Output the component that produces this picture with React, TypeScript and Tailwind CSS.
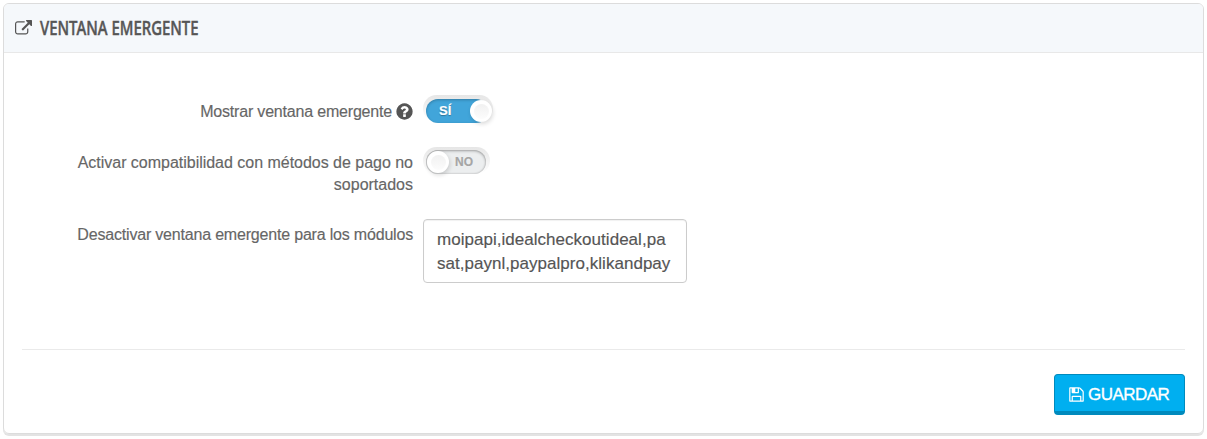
import React from "react";

type IconProps = { className?: string; d: string };

const PATHS = {
  externalLink:
    "M1408 928v320q0 119-84.5 203.5t-203.5 84.5h-832q-119 0-203.5-84.5t-84.5-203.5v-832q0-119 84.5-203.5t203.5-84.5h704q14 0 23 9t9 23v64q0 14-9 23t-23 9h-704q-66 0-113 47t-47 113v832q0 66 47 113t113 47h832q66 0 113-47t47-113v-320q0-14 9-23t23-9h64q14 0 23 9t9 23zm384-864v512q0 26-19 45t-45 19-45-19l-176-176-652 652q-10 10-23 10t-23-10l-114-114q-10-10-10-23t10-23l652-652-176-176q-19-19-19-45t19-45 45-19h512q26 0 45 19t19 45z",
  floppy:
    "M512 1536h768v-384h-768v384zm896 0h128v-896q0-14-10-38.5t-20-34.5l-281-281q-10-10-34-20t-39-10v416q0 40-28 68t-68 28h-576q-40 0-68-28t-28-68v-416h-128v1280h128v-416q0-40 28-68t68-28h832q40 0 68 28t28 68v416zm-384-928v-320q0-13-9.5-22.5t-22.5-9.5h-192q-13 0-22.5 9.5t-9.5 22.5v320q0 13 9.5 22.5t22.5 9.5h192q13 0 22.5-9.5t9.5-22.5zm640 32v928q0 40-28 68t-68 28h-1344q-40 0-68-28t-28-68v-1344q0-40 28-68t68-28h928q40 0 88 20t76 48l280 280q28 28 48 76t20 88z",
  question:
    "M1024 1376v-192q0-14-9-23t-23-9h-192q-14 0-23 9t-9 23v192q0 14 9 23t23 9h192q14 0 23-9t9-23zm256-672q0-88-55.5-163t-138.5-116-170-41q-243 0-371 213-15 24 8 42l132 100q7 6 19 6 16 0 25-12 53-68 86-92 34-24 86-24 48 0 85.5 26t37.5 59q0 38-20 61t-68 45q-63 28-115.5 86.5t-52.5 125.5v36q0 14 9 23t23 9h192q14 0 23-9t9-23q0-19 21.5-49.5t54.5-49.5q32-18 49-28.5t46-35 44.5-48 28-60.5 12.5-81zm384 192q0 209-103 385.5t-279.5 279.5-385.5 103-385.5-103-279.5-279.5-103-385.5 103-385.5 279.5-279.5 385.5-103 385.5 103 279.5 279.5 103 385.5z",
};

function Icon({ className, d }: IconProps) {
  return (
    <svg viewBox="0 0 1792 1792" fill="currentColor" className={className} aria-hidden="true">
      <path d={d} />
    </svg>
  );
}

function Knob({ className }: { className: string }) {
  return (
    <span
      className={`absolute flex size-[22px] items-center justify-center rounded-full bg-white shadow-[1px_2px_4px_rgba(0,0,0,0.15)] ${className}`}
    >
      <span className="size-[15px] rounded-full bg-linear-to-b from-[#f1f1f1] to-[#fcfcfc]" />
    </span>
  );
}

function Toggle({ on }: { on: boolean }) {
  return (
    <button
      type="button"
      role="switch"
      aria-checked={on}
      className={`relative block h-[27px] rounded-full bg-linear-to-b from-[#e6e6e6] to-white px-[3px] pt-1 ${on ? "w-[70px]" : "w-[67px]"}`}
    >
      {on ? (
        <span className="flex h-6 w-[62px] items-center rounded-full bg-[#41a5da] pl-[13px] text-[13px] font-bold text-white shadow-[inset_0_1px_3px_rgba(0,0,0,0.25)] [text-shadow:0_1px_1px_rgba(0,0,0,0.3)]">
          SÍ
        </span>
      ) : (
        <span className="-mt-px flex h-6 w-[60px] items-center rounded-full bg-[#eceeef] pl-[29px] text-[12px] font-bold text-[#a5a5a5] shadow-[inset_0_1px_3px_rgba(0,0,0,0.3),inset_0_0_2px_rgba(0,0,0,0.2)]">
          NO
        </span>
      )}
      <Knob className={on ? "right-[1px] top-[5px]" : "left-[4px] top-[4px]"} />
    </button>
  );
}

export default function App() {
  return (
    <main className="h-[439px] w-[1207px] bg-white px-[3px] pt-[3px] font-['Liberation_Sans',sans-serif] text-[#666]">
      <section className="flex h-[431px] w-[1201px] flex-col overflow-hidden rounded-[6px] border border-[#dcdcdc] shadow-[0_2px_0_#e3e3e3]">
        <header className="flex h-[49px] shrink-0 items-center border-b border-[#e8e8e8] bg-[#f5f8fb] pl-[11px] text-[#555]">
          <Icon d={PATHS.externalLink} className="h-[17px] w-[17px]" />
          <h2 className="ml-2 h-7 w-[162px] origin-left scale-x-[0.765] whitespace-nowrap font-['Noto_Sans',sans-serif] text-[19.5px] font-medium leading-7 [-webkit-text-stroke:0.5px_#555]">
            VENTANA EMERGENTE
          </h2>
        </header>

        <div className="flex flex-col pt-[42px] text-[16px] leading-[22px] [-webkit-text-stroke:0.15px]">
          <div className="flex h-[52px]">
            <div className="flex w-[409px] items-start justify-end pt-[6px]">
              <span className="whitespace-nowrap tracking-[-0.19px]">Mostrar ventana emergente</span>
              <Icon d={PATHS.question} className="-mr-[1px] ml-[3px] mt-[1px] size-[19px] text-[#555]" />
            </div>
            <div className="ml-[10px]">
              <Toggle on />
            </div>
          </div>
          <div className="flex h-[72px]">
            <div className="w-[409px] pl-[60px] pt-[5px] text-right">
              <div className="whitespace-nowrap tracking-[-0.02px]">Activar compatibilidad con métodos de pago no</div>
              <div>soportados</div>
            </div>
            <div className="ml-[10px]">
              <Toggle on={false} />
            </div>
          </div>
          <div className="flex h-16">
            <div className="w-[409px] whitespace-nowrap pt-[5px] text-right tracking-[-0.19px]">
              Desactivar ventana emergente para los módulos
            </div>
            <div className="ml-[10px] h-16 w-[264px] rounded-[4px] border border-[#ccc] px-[13px] pt-[8px] text-[17px] leading-6 tracking-[0.03px] text-[#555] shadow-[inset_0_1px_1px_rgba(0,0,0,0.06)]">
              <div className="whitespace-nowrap">moipapi,idealcheckoutideal,pa</div>
              <div className="whitespace-nowrap">sat,paynl,paypalpro,klikandpay</div>
            </div>
          </div>
        </div>

        <footer className="mx-[18px] mt-[66px] flex justify-end border-t border-[#eaeaea] pt-6">
          <button
            type="button"
            className="flex h-[41px] w-[131px] items-center rounded-[4px] border border-b-4 border-[#008abd] bg-[#00aff0] pl-[13px] text-[17px] text-white"
          >
            <Icon d={PATHS.floppy} className="mt-[2px] size-[17px]" />
            <span className="ml-[3px] mt-[4px] whitespace-nowrap tracking-[-0.55px] [-webkit-text-stroke:0.35px_white]">GUARDAR</span>
          </button>
        </footer>
      </section>
    </main>
  );
}
